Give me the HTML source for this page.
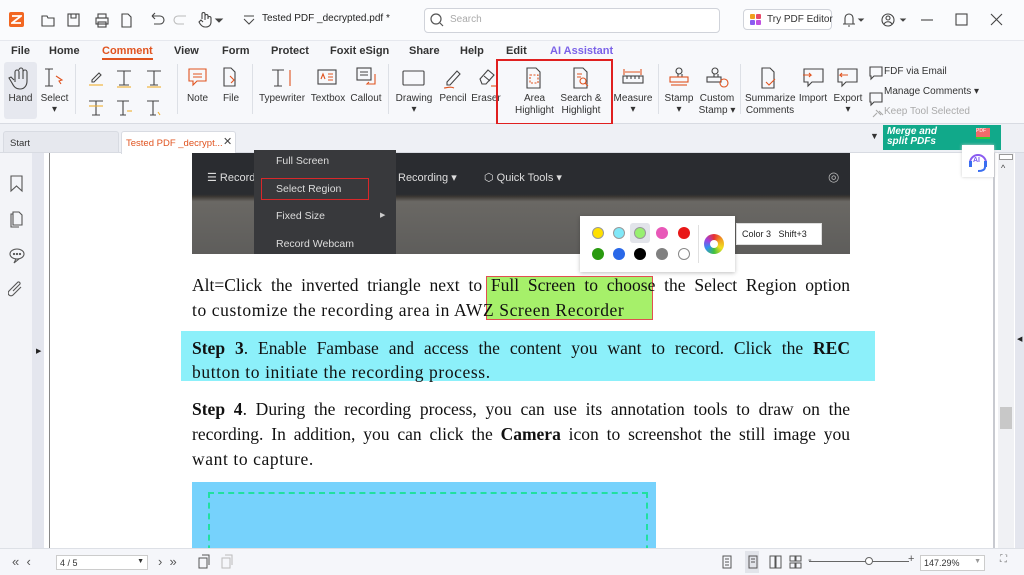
<!DOCTYPE html>
<html><head><meta charset="utf-8"><style>
*{margin:0;padding:0;box-sizing:border-box}
body{width:1024px;height:575px;overflow:hidden;background:#fff;font-family:"Liberation Sans",sans-serif;position:relative;color:#222}
.a{position:absolute}
.t{font-size:10px;color:#333;position:absolute;text-align:center;white-space:nowrap}
.m{position:absolute;top:45px;font-size:11px;font-weight:bold;color:#333}
.ser{font-family:"Liberation Serif",serif;font-size:17.5px;color:#111;position:absolute;left:192px;width:658px;white-space:nowrap;text-align:justify;text-align-last:justify}
.ls{text-align-last:left;letter-spacing:0.6px}
svg{position:absolute}
.dot{position:absolute;width:12px;height:12px;border-radius:50%}
</style></head><body>
<!-- title bar -->
<div class="a" style="left:0;top:0;width:1024px;height:40px;background:#fafbfd"></div>
<div class="a" style="left:9px;top:12px;width:15px;height:15px;background:#f26722;border-radius:2px"></div>
<svg style="left:11px;top:14px" width="11" height="11"><path d="M1 2H10L1 9H10" stroke="#fff" stroke-width="1.8" fill="none"/></svg>
<svg style="left:40px;top:12px" width="200" height="16" fill="none" stroke="#444" stroke-width="1.1">
<path d="M2 4h5l1 2h6v8H2z"/><rect x="28" y="2" width="11" height="12"/><path d="M31 2v4h5V2"/>
<rect x="56" y="6" width="12" height="6"/><rect x="58" y="2" width="8" height="4"/><rect x="58" y="10" width="8" height="5"/>
<path d="M82 2h6l3 3v10h-9z"/><path d="M112 4h8a4 4 0 010 8h-6M112 4l3-3M112 4l3 3"/>
<path d="M146 4h-8a4 4 0 000 8h6" stroke="#bbb"/></svg>
<svg style="left:197px;top:11px" width="30" height="18" fill="none" stroke="#444" stroke-width="1.1"><path d="M5 8V3a1.5 1.5 0 013 0v6M8 7V5a1.5 1.5 0 013 0v3M11 7a1.5 1.5 0 013 0v4c0 3-2 5-5 5H8c-3 0-5-3-6-5l2-2 2 2"/><path d="M19 8l3 3 3-3z" fill="#444"/></svg>
<svg style="left:243px;top:14px" width="12" height="12" fill="none" stroke="#444"><path d="M1 2h10M1 5l5 5 5-5"/></svg>
<div class="a" style="left:262px;top:13px;font-size:10px;color:#222">Tested PDF _decrypted.pdf *</div>
<div class="a" style="left:424px;top:8px;width:296px;height:25px;border:1px solid #d0d3da;border-radius:4px;background:#fff"></div>
<svg style="left:430px;top:13px" width="14" height="14" fill="none" stroke="#555" stroke-width="1.2"><circle cx="6" cy="6" r="5"/><path d="M10 10l3 3"/></svg>
<div class="a" style="left:450px;top:14px;font-size:10px;color:#aaa">Search</div>
<div class="a" style="left:743px;top:9px;width:89px;height:21px;border:1px solid #d0d3da;border-radius:4px;background:#fff"></div>
<div class="a" style="left:750px;top:14px;width:5px;height:5px;background:#f0a020;border-radius:1px"></div>
<div class="a" style="left:756px;top:14px;width:5px;height:5px;background:#e84a6a;border-radius:1px"></div>
<div class="a" style="left:750px;top:20px;width:5px;height:5px;background:#8a5cf0;border-radius:1px"></div>
<div class="a" style="left:756px;top:20px;width:5px;height:5px;background:#c050e0;border-radius:1px"></div>
<div class="a" style="left:767px;top:14px;font-size:10px;color:#333">Try PDF Editor</div>
<svg style="left:840px;top:10px" width="180" height="20" fill="none" stroke="#444" stroke-width="1.1"><path d="M5 14V8a4 4 0 018 0v6H3h12M8 16h2"/><path d="M19 9l2 2 2-2z" fill="#444"/><circle cx="48" cy="10" r="6"/><circle cx="48" cy="8" r="2"/><path d="M44 14c2-3 6-3 8 0"/><path d="M61 9l2 2 2-2z" fill="#444"/><path d="M81 10h12"/><rect x="116" y="4" width="11" height="11"/><path d="M151 4l11 11M162 4l-11 11"/></svg>
<!-- menu -->
<div class="a" style="left:0;top:40px;width:1024px;height:84px;background:#f7f8fb;border-top:1px solid #e6e8ee;border-bottom:1px solid #d8dbe2"></div>
<div class="m" style="left:11px">File</div><div class="m" style="left:49px">Home</div>
<div class="m" style="left:102px;color:#e0531f;border-bottom:2px solid #e0531f;padding-bottom:1px">Comment</div>
<div class="m" style="left:174px">View</div><div class="m" style="left:222px">Form</div><div class="m" style="left:271px">Protect</div><div class="m" style="left:330px">Foxit eSign</div><div class="m" style="left:409px">Share</div><div class="m" style="left:460px">Help</div><div class="m" style="left:506px">Edit</div><div class="m" style="left:550px;color:#7b62e8">AI Assistant</div>
<!-- ribbon -->
<div class="a" style="left:4px;top:62px;width:33px;height:57px;background:#e6e8ef;border-radius:3px"></div>
<svg style="left:0;top:64px" width="1024" height="56" fill="none" stroke="#444" stroke-width="1.1">
<path d="M15 18V8a2 2 0 014 0v7M19 6a2 2 0 014 0v9M23 8a2 2 0 014 0v9c0 5-3 8-7 8s-6-2-8-6l-3-5 2-1 3 3"/>
<path d="M45 5h8M49 5v17M45 22h8"/><path d="M56 12l6 4-3 1 2 3" stroke="#e0531f"/>
<path d="M92 16l7-7 2 2-7 7h-2z"/><path d="M89 21h14" stroke="#f0b030"/>
<path d="M117 7h14M124 7v14M119 21h10" /><path d="M117 23h14" stroke="#f0b030"/>
<path d="M147 7h14M154 7v14M150 21h8"/><path d="M147 23h14" stroke="#f0b030"/>
<path d="M89 37h14M96 37v14M92 51h8"/><path d="M89 42h14" stroke="#f0b030"/>
<path d="M117 37h12M123 37v14M120 51h6"/><path d="M127 47h5" stroke="#f0b030"/>
<path d="M147 37h12M153 37v14M150 51h6"/><path d="M158 48l2 3" stroke="#f0b030"/>
<path d="M189 5h17v12h-9l-4 4v-4h-4z" stroke="#e0531f"/><path d="M193 10h9M193 13h9" stroke="#e0531f"/>
<path d="M224 4h7l4 4v14h-11z"/><path d="M230 12l4 4-3 3" stroke="#e0531f"/>
<path d="M272 6h12M278 6v16M274 22h8"/><path d="M290 6v16" stroke="#e0531f"/>
<rect x="318" y="6" width="18" height="14"/><path d="M321 15l2-5 2 5M328 10h5M328 13h5M328 16h5" stroke="#e0531f"/>
<rect x="357" y="4" width="14" height="12"/><path d="M360 8h8M360 11h8"/><path d="M375 10v10h-8l2-2" stroke="#e0531f"/>
<rect x="403" y="7" width="21" height="14" rx="1"/>
<path d="M447 18l10-11 3 3-10 11h-3z"/><path d="M444 24c3 0 6-2 10 0" stroke="#e0531f"/>
<path d="M480 15l8-9 6 5-8 9h-4z"/><path d="M484 12l6 5"/><path d="M491 22h7" stroke="#e0531f"/>
<path d="M527 4h9l4 4v16h-13z"/><rect x="530" y="11" width="8" height="8" stroke="#e0531f" stroke-dasharray="2 1.5"/>
<path d="M574 4h9l4 4v16h-13z"/><path d="M577 10h5M577 13h4" stroke="#e0531f"/><circle cx="583" cy="17" r="3" stroke="#e0531f"/><path d="M585 19l3 3" stroke="#e0531f"/>
<path d="M624 5v6M641 5v6M625 8h15" stroke="#e0531f"/><rect x="623" y="12" width="20" height="7"/><path d="M627 12v3M631 12v3M635 12v3M639 12v3"/>
<circle cx="679" cy="7" r="3"/><path d="M678 10v3M682 10v3"/><rect x="670" y="13" width="18" height="5" stroke="#e0531f"/><path d="M671 21h16" stroke="#e0531f"/>
<circle cx="715" cy="7" r="3"/><path d="M714 10v3M718 10v3"/><rect x="707" y="13" width="14" height="5"/><circle cx="724" cy="19" r="4" stroke="#e0531f"/>
<path d="M762 4h8l4 4v16h-12z"/><path d="M766 18l3 3 6-6" stroke="#e0531f"/>
<path d="M804 5h19v13h-11l-4 4v-4h-4z"/><path d="M803 11h8l-2-2M811 11l-2 2" stroke="#e0531f"/>
<path d="M838 5h19v13h-11l-4 4v-4h-4z"/><path d="M848 11h-8l2-2M840 11l2 2" stroke="#e0531f"/>
<path d="M870 3h12v9h-8l-3 3v-3h-1z"/><path d="M870 29h12v9h-8l-3 3v-3h-1z"/>
<path d="M879 47l4 4M876 46l5 5M873 53l4-4" stroke="#aaa"/>
</svg>
<div class="t" style="left:4px;top:93px;width:33px">Hand</div>
<div class="t" style="left:38px;top:93px;width:33px">Select<br>▾</div>
<div class="t" style="left:180px;top:93px;width:35px">Note</div><div class="t" style="left:216px;top:93px;width:30px">File</div>
<div class="t" style="left:257px;top:93px;width:50px">Typewriter</div><div class="t" style="left:309px;top:93px;width:38px">Textbox</div><div class="t" style="left:348px;top:93px;width:36px">Callout</div>
<div class="t" style="left:394px;top:93px;width:40px">Drawing<br>▾</div><div class="t" style="left:437px;top:93px;width:32px">Pencil</div><div class="t" style="left:471px;top:93px;width:30px">Eraser</div>
<div class="a" style="left:496px;top:59px;width:117px;height:66px;border:2px solid #e02020"></div>
<div class="t" style="left:512px;top:93px;width:45px;line-height:12px">Area<br>Highlight</div>
<div class="t" style="left:558px;top:93px;width:46px;line-height:12px">Search &amp;<br>Highlight</div>
<div class="t" style="left:612px;top:93px;width:42px">Measure<br>▾</div>
<div class="t" style="left:664px;top:93px;width:30px">Stamp<br>▾</div>
<div class="t" style="left:697px;top:93px;width:40px;line-height:12px">Custom<br>Stamp ▾</div>
<div class="t" style="left:745px;top:93px;width:50px;line-height:12px">Summarize<br>Comments</div>
<div class="t" style="left:797px;top:93px;width:32px">Import</div><div class="t" style="left:831px;top:93px;width:34px">Export<br>▾</div>
<div class="t" style="left:884px;top:66px;text-align:left">FDF via Email</div>
<div class="t" style="left:884px;top:86px;text-align:left">Manage Comments ▾</div>
<div class="t" style="left:884px;top:106px;text-align:left;color:#aaa">Keep Tool Selected</div>
<div class="a" style="left:75px;top:64px;width:1px;height:50px;background:#dde0e6"></div>
<div class="a" style="left:177px;top:64px;width:1px;height:50px;background:#dde0e6"></div>
<div class="a" style="left:252px;top:64px;width:1px;height:50px;background:#dde0e6"></div>
<div class="a" style="left:388px;top:64px;width:1px;height:50px;background:#dde0e6"></div>
<div class="a" style="left:658px;top:64px;width:1px;height:50px;background:#dde0e6"></div>
<div class="a" style="left:740px;top:64px;width:1px;height:50px;background:#dde0e6"></div>
<!-- tabs -->
<div class="a" style="left:0;top:124px;width:1024px;height:29px;background:#eef0f5;border-bottom:1px solid #d8dbe2"></div>
<div class="a" style="left:3px;top:131px;width:116px;height:22px;background:#e6e8ee;border:1px solid #d8dbe2;border-radius:3px 3px 0 0"></div>
<div class="a" style="left:10px;top:138px;font-size:9.5px;color:#333">Start</div>
<div class="a" style="left:121px;top:131px;width:115px;height:23px;background:#fff;border:1px solid #d8dbe2;border-bottom:none;border-radius:3px 3px 0 0"></div>
<div class="a" style="left:126px;top:138px;font-size:9.5px;color:#e0531f">Tested PDF _decrypt...</div>
<div class="a" style="left:223px;top:135px;font-size:11px;color:#444">✕</div>
<div class="a" style="left:870px;top:131px;font-size:9px;color:#333">▼</div>
<div class="a" style="left:883px;top:125px;width:118px;height:25px;background:#11a98a"></div>
<div class="a" style="left:887px;top:127px;font-size:10px;line-height:10px;color:#fff;font-weight:bold;font-style:italic">Merge and<br>split PDFs</div>
<div class="a" style="left:976px;top:128px;width:14px;height:9px;background:#f26a6a;font-size:5px;color:#fff">PDF</div>
<div class="a" style="left:976px;top:137px;width:14px;height:2px;background:#3c3"></div>
<!-- left panel -->
<div class="a" style="left:0;top:153px;width:32px;height:395px;background:#f3f4f8"></div>
<div class="a" style="left:32px;top:153px;width:12px;height:395px;background:#e4e6ee"></div>
<div class="a" style="left:49px;top:153px;width:1px;height:395px;background:#888"></div>
<svg style="left:8px;top:174px" width="20" height="130" fill="none" stroke="#555" stroke-width="1.1">
<path d="M3 2h11v15l-5.5-5-5.5 5z"/><path d="M5 38h6l3 3v10H5z"/><path d="M5 40H3v13h8"/>
<ellipse cx="9" cy="80" rx="7" ry="5"/><path d="M8 85l-2 4 5-4"/><circle cx="6" cy="80" r=".6"/><circle cx="9" cy="80" r=".6"/><circle cx="12" cy="80" r=".6"/>
<path d="M13 113l-8 8a2.5 2.5 0 01-4-4l9-9a1.6 1.6 0 012 2l-7 7"/></svg>
<div class="a" style="left:36px;top:347px;font-size:7px;color:#222">▶</div>
<!-- right scrollbar -->
<div class="a" style="left:993px;top:153px;width:2px;height:395px;background:#c8cad0"></div>
<div class="a" style="left:998px;top:153px;width:16px;height:395px;background:#f0f1f4"></div>
<div class="a" style="left:999px;top:154px;width:14px;height:6px;border:1px solid #999;background:#fff"></div>
<div class="a" style="left:1001px;top:163px;font-size:9px;color:#444">^</div>
<div class="a" style="left:1000px;top:407px;width:12px;height:22px;background:#c8c8c8"></div>
<div class="a" style="left:1015px;top:153px;width:9px;height:395px;background:#e4e6ee"></div>
<div class="a" style="left:1017px;top:335px;font-size:7px">◀</div>
<div class="a" style="left:962px;top:145px;width:32px;height:32px;background:#fff;box-shadow:0 0 3px #ccc"></div>
<svg style="left:967px;top:150px" width="22" height="22" fill="none" stroke-width="2"><path d="M3 13a8 8 0 0116 0" stroke="#8a5cf0"/><rect x="2" y="11" width="3" height="6" fill="#3a6ef0"/><rect x="17" y="11" width="3" height="6" fill="#3a6ef0"/><path d="M18 17c0 3-3 4-7 4" stroke="#3a6ef0"/></svg>
<div class="a" style="left:973px;top:157px;font-size:7px;font-weight:bold;color:#7a5cf0">AI</div>
<!-- page content -->
<div class="a" style="left:192px;top:153px;width:658px;height:101px;background:linear-gradient(#2a2c30 0,#2a2c30 41%,#3a3632 43%,#6a6864 48%,#5e5d5b 100%)"></div>
<div class="a" style="left:207px;top:171px;font-size:11px;color:#ddd">☰ Record</div>
<div class="a" style="left:398px;top:171px;font-size:11px;color:#ddd">Recording ▾</div>
<div class="a" style="left:484px;top:171px;font-size:11px;color:#ddd">⬡ Quick Tools ▾</div>
<div class="a" style="left:828px;top:169px;font-size:13px;color:#bbb">◎</div>
<div class="a" style="left:254px;top:150px;width:142px;height:104px;background:#38393c"></div>
<div class="a" style="left:276px;top:155px;font-size:10.5px;color:#ddd">Full Screen</div>
<div class="a" style="left:261px;top:178px;width:108px;height:22px;border:1.5px solid #d8282a"></div>
<div class="a" style="left:276px;top:183px;font-size:10.5px;color:#ddd">Select Region</div>
<div class="a" style="left:276px;top:210px;font-size:10.5px;color:#ddd">Fixed Size</div>
<div class="a" style="left:380px;top:211px;font-size:7px;color:#ccc">▶</div>
<div class="a" style="left:276px;top:238px;font-size:10.5px;color:#ddd">Record Webcam</div>
<!-- color picker -->
<div class="a" style="left:580px;top:216px;width:155px;height:56px;background:#fff;box-shadow:0 1px 4px rgba(0,0,0,.25)"></div>
<div class="a" style="left:630px;top:223px;width:20px;height:20px;background:#e2e4ea;border-radius:3px"></div>
<div class="dot" style="left:592px;top:227px;background:#ffe000;border:1px solid #999"></div>
<div class="dot" style="left:613px;top:227px;background:#80e8f8;border:1px solid #999"></div>
<div class="dot" style="left:634px;top:227px;background:#98f070;border:1px solid #999"></div>
<div class="dot" style="left:656px;top:227px;background:#e858b8"></div>
<div class="dot" style="left:678px;top:227px;background:#e81818"></div>
<div class="dot" style="left:592px;top:248px;background:#2a9a10"></div>
<div class="dot" style="left:613px;top:248px;background:#2a68e8"></div>
<div class="dot" style="left:634px;top:248px;background:#000"></div>
<div class="dot" style="left:656px;top:248px;background:#808080"></div>
<div class="dot" style="left:678px;top:248px;background:#fff;border:1px solid #888"></div>
<div class="a" style="left:698px;top:225px;width:1px;height:38px;background:#e0e0e0"></div>
<div class="a" style="left:704px;top:234px;width:20px;height:20px;border-radius:50%;background:conic-gradient(#e83030,#f0a020,#f0e020,#40c040,#3090f0,#a040e0,#e83030)"></div>
<div class="a" style="left:710px;top:240px;width:8px;height:8px;border-radius:50%;background:#fff"></div>
<div class="a" style="left:736px;top:223px;width:86px;height:22px;background:#fff;border:1px solid #ddd"></div>
<div class="a" style="left:742px;top:229px;font-size:9px;color:#222">Color 3 &nbsp;&nbsp;Shift+3</div>
<!-- text -->
<div class="a" style="left:486px;top:276px;width:167px;height:44px;background:#a6f06a;border:1px solid #e05050"></div>
<div class="ser" style="top:275px">Alt=Click the inverted triangle next to Full Screen to choose the Select Region option</div>
<div class="ser ls" style="top:300px">to customize the recording area in AWZ Screen Recorder</div>
<div class="a" style="left:181px;top:331px;width:694px;height:50px;background:#8cf0fa"></div>
<div class="ser" style="top:338px"><b>Step 3</b>. Enable Fambase and access the content you want to record. Click the <b>REC</b></div>
<div class="ser ls" style="top:362px">button to initiate the recording process.</div>
<div class="ser" style="top:399px"><b>Step 4</b>. During the recording process, you can use its annotation tools to draw on the</div>
<div class="ser" style="top:424px">recording. In addition, you can click the <b>Camera</b> icon to screenshot the still image you</div>
<div class="ser ls" style="top:449px">want to capture.</div>
<div class="a" style="left:192px;top:482px;width:464px;height:70px;background:#76d2fc"></div>
<div class="a" style="left:208px;top:492px;width:440px;height:70px;border:2px dashed #20e0a0"></div>
<!-- status bar -->
<div class="a" style="left:0;top:548px;width:1024px;height:27px;background:#f5f6fa;border-top:1px solid #dde0e6"></div>
<div class="a" style="left:12px;top:554px;font-size:13px;color:#555">«&nbsp;&nbsp;‹</div>
<div class="a" style="left:56px;top:555px;width:92px;height:15px;border:1px solid #ccc;background:#fff;font-size:9px;padding:2px 3px;color:#333">4 / 5<span style="float:right;font-size:7px">▼</span></div>
<div class="a" style="left:158px;top:554px;font-size:13px;color:#555">›&nbsp;&nbsp;»</div>
<svg style="left:196px;top:553px" width="40" height="18" fill="none" stroke="#555"><rect x="3" y="5" width="8" height="10"/><path d="M6 2h7v10"/><rect x="26" y="5" width="8" height="10" stroke="#bbb"/><path d="M29 2h7v10" stroke="#bbb"/></svg>
<div class="a" style="left:745px;top:551px;width:14px;height:22px;background:#e2e4ea"></div>
<svg style="left:720px;top:554px" width="90" height="16" fill="none" stroke="#555"><rect x="3" y="2" width="8" height="12"/><path d="M5 5h4M5 8h4M5 11h4"/><rect x="29" y="2" width="8" height="12"/><path d="M31 5h4M31 8h4"/><rect x="50" y="2" width="5" height="12"/><rect x="56" y="2" width="5" height="12"/><rect x="70" y="2" width="5" height="5"/><rect x="76" y="2" width="5" height="5"/><rect x="70" y="9" width="5" height="5"/><rect x="76" y="9" width="5" height="5"/></svg>
<div class="a" style="left:809px;top:561px;width:100px;height:1px;background:#666"></div>
<div class="a" style="left:808px;top:554px;font-size:11px;color:#555">-</div>
<div class="a" style="left:865px;top:557px;width:8px;height:8px;border:1px solid #666;border-radius:50%;background:#fff"></div>
<div class="a" style="left:908px;top:553px;font-size:11px;color:#555">+</div>
<div class="a" style="left:920px;top:555px;width:65px;height:16px;border:1px solid #ccc;background:#fff;font-size:9px;padding:2px 3px;color:#333">147.29%<span style="float:right;font-size:7px;color:#999">▼</span></div>
<div class="a" style="left:1000px;top:554px;font-size:10px;color:#777">⛶</div>
</body></html>
